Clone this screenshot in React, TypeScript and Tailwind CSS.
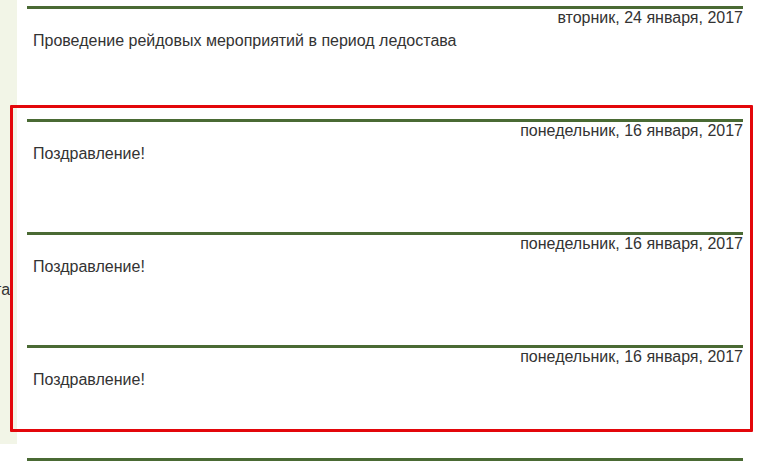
import React from 'react';

const items = [
  { date: 'вторник, 24 января, 2017', title: 'Проведение рейдовых мероприятий в период ледостава' },
  { date: 'понедельник, 16 января, 2017', title: 'Поздравление!' },
  { date: 'понедельник, 16 января, 2017', title: 'Поздравление!' },
  { date: 'понедельник, 16 января, 2017', title: 'Поздравление!' },
];

const NewsItem: React.FC<{ date: string; title: string }> = ({ date, title }) => (
  <div className="h-[113px] border-t-[3px] border-[#4a6a34]">
    <div className="text-right text-[16px] leading-[18px] text-[#333]">{date}</div>
    <div className="mt-[5px] pl-[6px] text-[16px] leading-[18px] text-[#333]">{title}</div>
  </div>
);

export default function App() {
  return (
    <div
      className="relative h-[472px] w-[759px] overflow-hidden bg-white"
      style={{ fontFamily: '"Liberation Sans", Arial, sans-serif' }}
    >
      <div className="flex">
        <div className="relative h-[444px] w-[17px] shrink-0 overflow-hidden bg-[#f2f5e7]">
          <span className="absolute left-[-6px] top-[281px] text-[16px] leading-[18px] text-[#333]">та</span>
        </div>
        <div className="ml-[10px] w-[716px] pt-[6px]">
          {items.map((it, i) => (
            <NewsItem key={i} date={it.date} title={it.title} />
          ))}
          <div className="border-t-[3px] border-[#4a6a34]" />
        </div>
      </div>
      <div className="pointer-events-none absolute left-[10px] top-[105px] h-[327px] w-[743px] rounded-[1px] border-[3px] border-[#e3070b]" />
    </div>
  );
}
